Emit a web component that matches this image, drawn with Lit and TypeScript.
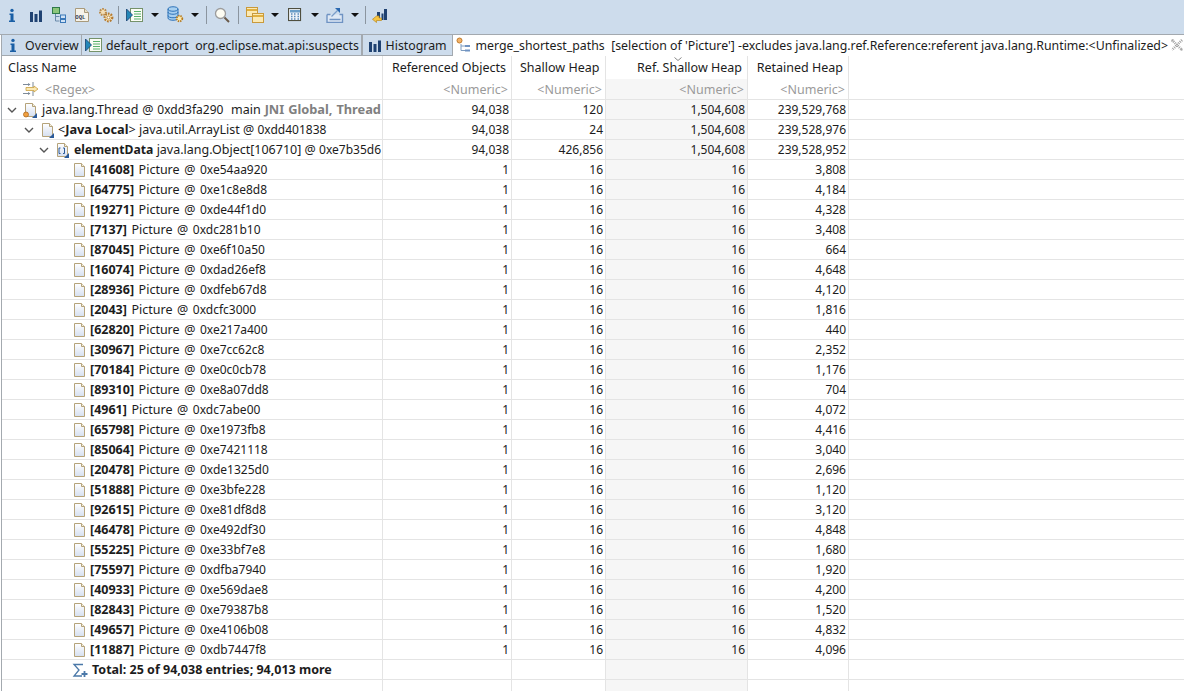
import { LitElement, html, css, svg } from "lit";
import { customElement } from "lit/decorators.js";

const grad = svg`<defs><linearGradient id="pg" x1="0" y1="0" x2="0" y2="1"><stop offset="0" stop-color="#ffffff"/><stop offset="1" stop-color="#d5dff0"/></linearGradient></defs>`;
const page = svg`${grad}<path d="M2.5 1.5h7l3 3v10h-10z" fill="url(#pg)" stroke="#b5a37a"/><path d="M9.5 1.5v3h3" fill="#f4efdf" stroke="#b5a37a"/>`;
const corner = svg`<path d="M9 16l5-5v5z" fill="#2a5a9a"/>`;

const I = {
  info: svg`<svg viewBox="0 0 16 16" width="16" height="16"><circle cx="8" cy="3.4" r="1.7" fill="#1a5fa5"/><path d="M5.5 6.5h4v7h1.5v1.5h-6v-1.5h1.5v-5.500h-1z" fill="#1a5fa5"/></svg>`,
  bars: svg`<svg viewBox="0 0 16 16" width="16" height="16"><path d="M2 5h3v10h-3zM6.500 7h3v8h-3zM11 3.500h3v11.500h-3z" fill="#1f4272"/></svg>`,
  tree: svg`<svg viewBox="0 0 16 16" width="16" height="16"><rect x="1.500" y="0.500" width="7" height="6" fill="#8cc67a" stroke="#2f7a4a"/><path d="M4.500 7v7h4M4.500 9.500h4" fill="none" stroke="#6a8aaa"/><rect x="9.500" y="8" width="5" height="3.500" fill="#cfe2f5" stroke="#3a78b8"/><rect x="9.500" y="12.500" width="5" height="3" fill="#cfe2f5" stroke="#3a78b8"/></svg>`,
  oql: svg`<svg viewBox="0 0 16 16" width="16" height="16"><path d="M1.500 1.500h9l4 4v9h-13z" fill="#f6f3ea" stroke="#a89a7c"/><path d="M10.500 1.500v4h4" fill="#e8e0c8" stroke="#a89a7c"/><text x="1.300" y="11.500" font-size="5.600" font-weight="700" font-family="Liberation Mono, monospace" fill="#333a55">OQL</text></svg>`,
  gears: svg`<svg viewBox="0 0 16 16" width="16" height="16"><circle cx="5" cy="5" r="3" fill="#f3dfb8" stroke="#b98a4a" stroke-width="2" stroke-dasharray="1.600 1"/><circle cx="10.500" cy="10.500" r="3.800" fill="#f7e3b4" stroke="#b57a30" stroke-width="2.200" stroke-dasharray="1.700 1.100"/><circle cx="10.500" cy="10.500" r="1.500" fill="#fff" stroke="#a9762f" stroke-width=".8"/></svg>`,
  report: svg`<svg viewBox="0 0 18 16" width="18" height="16"><rect x="4.500" y="1.500" width="12" height="13" fill="#fbfdf6" stroke="#75926a"/><path d="M8 4.500h7M8 7h7M8 9.500h7M8 12h7" stroke="#58b06a"/><path d="M.5 2l6 6-6 6z" fill="#2387b8" stroke="#15406f" stroke-width=".8"/></svg>`,
  db: svg`<svg viewBox="0 0 18 17" width="18" height="17"><path d="M2 3c0-3 10-3 10 0v9c0 3-10 3-10 0z" fill="#a8d0f0" stroke="#2d72b8"/><path d="M2 6c0 3 10 3 10 0M2 9.500c0 3 10 3 10 0M2 3c0 3 10 3 10 0" fill="none" stroke="#2d72b8"/><circle cx="13.500" cy="12.500" r="2.800" fill="#fbe7a8" stroke="#b57a20" stroke-width="1.800" stroke-dasharray="1.400 .9"/></svg>`,
  search: svg`<svg viewBox="0 0 16 16" width="16" height="16"><circle cx="6.500" cy="6.500" r="5" fill="#fdfcf2" stroke="#9c9c9c" stroke-width="1.300"/><path d="M10.500 10.500l4.500 4.500" stroke="#6a5a4a" stroke-width="2"/></svg>`,
  windows: svg`<svg viewBox="0 0 18 16" width="18" height="16"><rect x=".5" y=".5" width="11" height="9" fill="#fbe9b4" stroke="#c99a3c"/><path d="M1 3h10" stroke="#e0b040" stroke-width="2"/><rect x="6.500" y="6.500" width="11" height="9" fill="#fbe9b4" stroke="#c99a3c"/><path d="M7 9h10" stroke="#e0b040" stroke-width="2"/></svg>`,
  calc: svg`<svg viewBox="0 0 14 14" width="14" height="14"><rect x=".5" y=".5" width="11" height="11" transform="scale(1.090)" fill="#eef3f8" stroke="#4f4f40"/><rect x="2" y="2" width="10" height="2.500" fill="#6a9ec8"/><path d="M3 6h1.500M6 6h1.500M9.500 6h1.500M3 8.500h1.500M6 8.500h1.500M9.500 8.500h1.500M3 11h1.500M6 11h1.500M9.500 11h1.500" stroke="#5a8ab8" stroke-width="1.500"/></svg>`,
  exp: svg`<svg viewBox="0 0 18 16" width="18" height="16"><path d="M1 7.500h3.500M13.500 7.500h3v8h-15.500v-8" fill="#dfe9f5" stroke="#6f93c3" stroke-width="1.400"/><path d="M3.500 12.500h11" stroke="#6f93c3" stroke-width="1.500"/><path d="M5.500 9.500l6-6" stroke="#7a9cc8" stroke-width="1.300"/><path d="M9 1h5v5z" fill="#2a68b0"/></svg>`,
  barsArrow: svg`<svg viewBox="0 0 16 16" width="16" height="16"><path d="M5 5h3v8h-3zM9.500 6.500h2v6.500h-2zM12 2h3v11h-3z" fill="#1f4272"/><path d="M7 9v2h2.500v2.500h-5v2l-4-3.200 4-3.300z" fill="#f6c544" stroke="#b98a20" stroke-width=".7"/></svg>`,
  merge: svg`<svg viewBox="0 0 16 17" width="16" height="17"><circle cx="3.500" cy="3.500" r="2.500" fill="#f3b36a" stroke="#c07a2a"/><path d="M5 7v6.500h4M5 9h4" fill="none" stroke="#7d9cc0"/><path d="M9 8h5v2h-5zM9 12.500h5v2h-5z" fill="#6f93c3"/></svg>`,
  thread: svg`<svg viewBox="0 0 16 16" width="16" height="16">${page}${corner}<circle cx="3" cy="12.500" r="2.500" fill="#f0a040" stroke="#b06a20" stroke-width=".8"/></svg>`,
  local: svg`<svg viewBox="0 0 16 16" width="16" height="16">${page}${corner}</svg>`,
  arr: svg`<svg viewBox="0 0 16 16" width="16" height="16">${page}<path d="M5.500 6h-1.500v5.500h1.500M8 6h1.500v5.500h-1.500" fill="none" stroke="#2a5a9a"/>${corner}</svg>`,
  file: svg`<svg viewBox="0 0 16 16" width="16" height="16">${page}</svg>`,
  sum: svg`<svg viewBox="0 0 16 16" width="16" height="16"><path d="M11 2.500h-9l5 5.500-5 6h8" fill="none" stroke="#4a78a8" stroke-width="1.300"/><path d="M12.500 9v6M9.500 12h6" stroke="#4a78a8" stroke-width="1.800"/></svg>`,
  filter: svg`<svg viewBox="0 0 18 16" width="18" height="16"><path d="M1 3.500h7M11 1v5M1 12.500h7M11 10v5" fill="none" stroke="#7d8a98"/><path d="M6 2l2.500 1.500-2.500 1.500zM6 11l2.500 1.500-2.500 1.500z" fill="#7d8a98"/><path d="M4 6.500h8v-1.500l4 3-4 3v-1.500h-8z" fill="#fbe9b4" stroke="#c9a040" stroke-width=".8"/></svg>`,
  close: svg`<svg viewBox="0 0 12 12" width="12" height="12"><path d="M1 1l10 10M11 1l-10 10" stroke="#a0a0a0" stroke-width="2.600" stroke-dasharray="1 1" fill="none"/><rect x="0.500" y="0.500" width="2" height="2" fill="#aaa"/><rect x="9.500" y="9.500" width="2" height="2" fill="#aaa"/></svg>`,
  chev: svg`<svg viewBox="0 0 10 10" width="10" height="10"><path d="M1 3l4 4 4-4" fill="none" stroke="#555" stroke-width="1.400"/></svg>`,
  sort: svg`<svg viewBox="0 0 8 4" width="8" height="4"><path d="M.5 .5l3.500 3 3.500-3" fill="none" stroke="#888"/></svg>`,
  drop: svg`<svg viewBox="0 0 8 4" width="8" height="4"><path d="M0 0h8l-4 4z" fill="#111"/></svg>`,
};

const pictures: [string, string][] = [
  ["41608", "0xe54aa920"], ["64775", "0xe1c8e8d8"], ["19271", "0xde44f1d0"], ["7137", "0xdc281b10"], ["87045", "0xe6f10a50"],
  ["16074", "0xdad26ef8"], ["28936", "0xdfeb67d8"], ["2043", "0xdcfc3000"], ["62820", "0xe217a400"], ["30967", "0xe7cc62c8"],
  ["70184", "0xe0c0cb78"], ["89310", "0xe8a07dd8"], ["4961", "0xdc7abe00"], ["65798", "0xe1973fb8"], ["85064", "0xe7421118"],
  ["20478", "0xde1325d0"], ["51888", "0xe3bfe228"], ["92615", "0xe81df8d8"], ["46478", "0xe492df30"], ["55225", "0xe33bf7e8"],
  ["75597", "0xdfba7940"], ["40933", "0xe569dae8"], ["82843", "0xe79387b8"], ["49657", "0xe4106b08"], ["11887", "0xdb7447f8"],
];
const retained = ["3,808","4,184","4,328","3,408","664","4,648","4,120","1,816","440","2,352","1,176","704","4,072","4,416","3,040","2,696","1,120","3,120","4,848","1,680","1,920","4,200","1,520","4,832","4,096"];

@customElement("app-root")
export class AppRoot extends LitElement {
  static styles = css`
    :host { display: block; width: 1184px; height: 691px; overflow: hidden; background: #fff; font-family: "Noto Sans", "Open Sans", sans-serif; font-size: 12px; color: #1c1c1c; }
    svg { display: block; flex: none; }
    .toolbar { display: flex; align-items: center; height: 34px; padding-left: .5px; background: #cddcec; box-sizing: border-box; padding-bottom: 5px; }
    .t1 { width: 23.4px; display: flex; justify-content: center; }
    .ic { width: 22px; display: flex; justify-content: center; }
    .ar { width: 18px; display: flex; justify-content: center; }
    .sep { width: 1px; height: 18px; background: #8b959f; margin-right: 5px; }
    .sa { margin-left: .5px; }
    .sb { margin-left: 2px; margin-right: 4px; }
    .sc { margin-left: 5px; }
    .sd { margin-left: 1px; margin-right: 3px; }
    .tabs { display: flex; height: 22px; box-sizing: border-box; border-top: 1px solid #a3a9af; background: #fff; white-space: pre; font-size: 12.33px; }
    .tab { display: flex; align-items: center; box-sizing: border-box; height: 21px; background: #cddcec; border-bottom: 1px solid #a3a9af; border-right: 1px solid #a3a9af; }
    .tab1 { width: 81px; margin-left: 1px; border-left: 1px solid #a3a9af; padding-left: 3px; gap: 4px; }
    .tab2 { width: 280px; padding-left: 3px; gap: 3px; }
    .tab3 { width: 91px; padding-left: 4px; margin-left: 0; border-left: 1px solid #a3a9af; gap: 3px; }
    .tab.active { flex: 1; width: auto; background: #fff; border: 0; height: 20px; padding-left: 3px; gap: 4px; }
    .closex { margin-left: auto; margin-right: 0; transform: translateX(-1px); }
    .table { border-left: 1px solid #a3a9af; margin-left: 1px; height: 635px; position: relative; }
    .row { display: grid; grid-template-columns: 381px 129px 94px 142px 101px 1fr; height: 20px; box-sizing: border-box; border-bottom: 1px solid #e4e4e4; }
    .row.head { height: 23px; border-bottom: 0; font-size: 12.5px; }
    .row.flt { height: 21px; color: #9a9a9a; font-size: 12.5px; }
    .row.fill { height: 11px; border-bottom: 0; }
    .c { box-sizing: border-box; border-right: 1px solid #e4e4e4; display: flex; align-items: center; justify-content: flex-end; padding-right: 2px; white-space: pre; overflow: hidden; min-width: 0; line-height: 19px; }
    .c.last { border-right: 0; }
    .sorted { background: #f6f6f6; }
    .sortedh { position: relative; }
    .sortind { position: absolute; left: 68px; top: 1px; }
    .head .c { padding-right: 5px; justify-content: flex-end; }
    .head .c.n { justify-content: flex-start; padding-left: 6px; }
    .head .c.s { justify-content: flex-start; padding-left: 8px; }
    .flt .c { padding-right: 3px; }
    .n { justify-content: flex-start; padding-right: 0; font-size: 12.5px; }
    .chev { width: 10px; margin-right: 6px; }
    .l0 { padding-left: 5px; word-spacing: .6px; }
    .l0 .ri { width: 19px; }
    .l1 { padding-left: 22px; }
    .l2 { padding-left: 37px; }
    .l2 .ri { width: 19px; }
    .l3 { padding-left: 70px; }
    .ri { width: 18px; flex: none; }
    .rs { width: 20px; flex: none; }
    .flt .n { padding-left: 20px; gap: 5px; }
    .b { font-weight: 700; }
    .bw { font-weight: 700; font-size: 12.8px; }
    .bn { font-weight: 700; font-size: 12.2px; }
    .g { font-weight: 700; color: #808080; font-size: 12.8px; }
    .hex { font-size: 12px; }
    .lbl { word-spacing: 1.300px; }
    .total { font-weight: 700; }
  `;

  private num(a: string, b: string, c: string, d: string) {
    return html`<div class="c">${a}</div><div class="c">${b}</div><div class="c sorted">${c}</div><div class="c">${d}</div><div class="c last"></div>`;
  }

  render() {
    const sl = (k: string, i: unknown) => html`<div class=${k}>${i}</div>`;
    return html`
      <div class="toolbar">
        ${sl("t1", I.info)}${sl("t1", I.bars)}${sl("t1", I.tree)}${sl("t1", I.oql)}${sl("t1", I.gears)}
        <div class="sep sa"></div>
        ${sl("ic", I.report)}${sl("ar", I.drop)}${sl("ic", I.db)}${sl("ar", I.drop)}
        <div class="sep sb"></div>
        ${sl("ic", I.search)}
        <div class="sep sc"></div>
        ${sl("ic", I.windows)}${sl("ar", I.drop)}${sl("ic", I.calc)}${sl("ar", I.drop)}${sl("ic", I.exp)}${sl("ar", I.drop)}
        <div class="sep sd"></div>
        ${sl("ic", I.barsArrow)}
      </div>
      <div class="tabs">
        <div class="tab tab1">${I.info}<span>Overview</span></div>
        <div class="tab tab2">${I.report}<span>default_report  org.eclipse.mat.api:suspects</span></div>
        <div class="tab tab3">${I.bars}<span>Histogram</span></div>
        <div class="tab active">${I.merge}<span>merge_shortest_paths  [selection of 'Picture'] -excludes java.lang.ref.Reference:referent java.lang.Runtime:&lt;Unfinalized&gt;</span><span class="closex">${I.close}</span></div>
      </div>
      <div class="table">
        <div class="row head">
          <div class="c n">Class Name</div>
          <div class="c">Referenced Objects</div>
          <div class="c s">Shallow Heap</div>
          <div class="c sortedh"><span class="sortind">${I.sort}</span>Ref. Shallow Heap</div>
          <div class="c">Retained Heap</div>
          <div class="c last"></div>
        </div>
        <div class="row flt">
          <div class="c n">${I.filter}<span>&lt;Regex&gt;</span></div>
          <div class="c">&lt;Numeric&gt;</div><div class="c">&lt;Numeric&gt;</div><div class="c sorted">&lt;Numeric&gt;</div><div class="c">&lt;Numeric&gt;</div><div class="c last"></div>
        </div>
        <div class="row">
          <div class="c n l0"><span class="chev">${I.chev}</span><span class="ri">${I.thread}</span><span>java.lang.Thread @ <span class="hex">0xdd3fa290</span>  main <span class="g">JNI Global, Thread</span></span></div>
          ${this.num("94,038", "120", "1,504,608", "239,529,768")}
        </div>
        <div class="row">
          <div class="c n l1"><span class="chev">${I.chev}</span><span class="ri">${I.local}</span><span>&lt;<span class="bw">Java Local</span>&gt; java.util.ArrayList @ <span class="hex">0xdd401838</span></span></div>
          ${this.num("94,038", "24", "1,504,608", "239,528,976")}
        </div>
        <div class="row">
          <div class="c n l2"><span class="chev">${I.chev}</span><span class="ri">${I.arr}</span><span><span class="bn">elementData</span> java.lang.Object[106710] @ <span class="hex">0xe7b35d6</span></span></div>
          ${this.num("94,038", "426,856", "1,504,608", "239,528,952")}
        </div>
        ${pictures.map(([idx, addr], i) => html`<div class="row">
          <div class="c n l3"><span class="ri">${I.file}</span><span class="lbl"><span class="b">[${idx}]</span> Picture @ <span class="hex">${addr}</span></span></div>
          ${this.num("1", "16", "16", retained[i])}
        </div>`)}
        <div class="row">
          <div class="c n l3"><span class="rs">${I.sum}</span><span class="total">Total: 25 of 94,038 entries; 94,013 more</span></div>
          ${this.num("", "", "", "")}
        </div>
        <div class="row fill">
          <div class="c"></div><div class="c"></div><div class="c"></div><div class="c sorted"></div><div class="c"></div><div class="c last"></div>
        </div>
      </div>
    `;
  }
}
